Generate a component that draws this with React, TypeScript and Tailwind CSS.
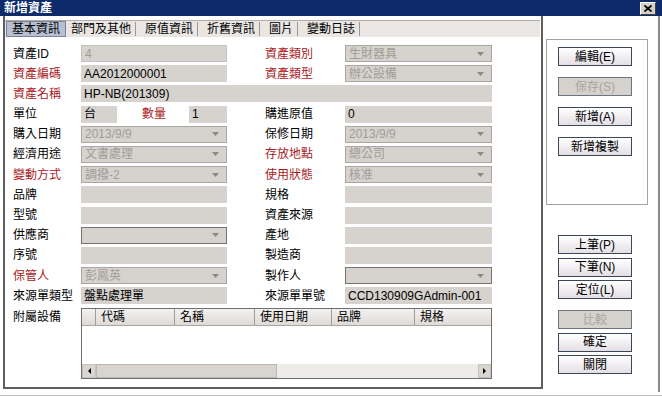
import React from "react";

type FieldKind = "text" | "dim" | "select" | "combo";

interface FieldProps {
  value?: string;
  kind?: FieldKind;
  className?: string;
}

const Arrow = () => (
  <svg width="7" height="4" viewBox="0 0 7 4" className="shrink-0 mr-[7px]">
    <path d="M0 0 L7 0 L3.5 4 Z" fill="#8c8884" />
  </svg>
);

const Field: React.FC<FieldProps> = ({ value = "", kind = "text", className = "" }) => {
  const base = "h-[17px] flex items-center bg-[#d6d3cf] pl-[3px] leading-none whitespace-nowrap overflow-hidden";
  if (kind === "select" || kind === "combo") {
    return (
      <div
        className={`${base} justify-between border ${
          kind === "combo" ? "border-[#77746f]" : "border-[#aaa6a2]"
        } text-[#a09c98] ${className}`}
      >
        <span>{value}</span>
        <Arrow />
      </div>
    );
  }
  if (kind === "dim") {
    return <div className={`${base} border border-[#c4c0bc] text-[#a09c98] ${className}`}>{value}</div>;
  }
  return <div className={`${base} text-black ${className}`}>{value}</div>;
};

const Label = ({ text, red }: { text: string; red?: boolean }) => (
  <div className={`h-[17px] flex items-center whitespace-nowrap ${red ? "text-[#a8191c]" : "text-black"}`}>
    {text}
  </div>
);

const Btn = ({ label, disabled }: { label: string; disabled?: boolean }) => (
  <div
    className={`w-[74px] h-[19px] shrink-0 flex items-center justify-center border leading-none ${
      disabled
        ? "border-[#6b7380] bg-[#d5d1cd] text-[#a9a5a1]"
        : "border-[#3b4656] bg-linear-to-b from-white to-[#e4dfe5] text-black"
    }`}
  >
    {label}
  </div>
);

const tabs = ["部門及其他", "原值資訊", "折舊資訊", "圖片", "變動日誌"];

const rows: [string, boolean, FieldProps, string, boolean, FieldProps][] = [
  ["資產ID", false, { kind: "dim", value: "4" }, "資產類別", true, { kind: "select", value: "生財器具" }],
  ["資產編碼", true, { value: "AA2012000001" }, "資產類型", true, { kind: "select", value: "辦公設備" }],
];

const rows2: [string, boolean, FieldProps, string, boolean, FieldProps][] = [
  ["購入日期", false, { kind: "select", value: "2013/9/9" }, "保修日期", false, { kind: "select", value: "2013/9/9" }],
  ["經濟用途", false, { kind: "select", value: "文書處理" }, "存放地點", true, { kind: "select", value: "總公司" }],
  ["變動方式", true, { kind: "select", value: "調撥-2" }, "使用狀態", true, { kind: "select", value: "核准" }],
  ["品牌", false, {}, "規格", false, {}],
  ["型號", false, {}, "資產來源", false, {}],
  ["供應商", false, { kind: "combo" }, "產地", false, {}],
  ["序號", false, {}, "製造商", false, {}],
  ["保管人", true, { kind: "select", value: "彭鳳英" }, "製作人", false, { kind: "combo" }],
  ["來源單類型", false, { value: "盤點處理單" }, "來源單單號", false, { value: "CCD130909GAdmin-001" }],
];

const FormRow = ({ r }: { r: [string, boolean, FieldProps, string, boolean, FieldProps] }) => (
  <>
    <Label text={r[0]} red={r[1]} />
    <Field {...r[2]} />
    <div />
    <Label text={r[3]} red={r[4]} />
    <Field {...r[5]} />
  </>
);

const columns = [
  { name: "代碼", w: "w-[79px]" },
  { name: "名稱", w: "w-[80px]" },
  { name: "使用日期", w: "w-[77px]" },
  { name: "品牌", w: "w-[83px]" },
  { name: "規格", w: "flex-1" },
];

const App: React.FC = () => {
  return (
    <div className="w-[662px] h-[396px] bg-white flex flex-col overflow-hidden text-[12px] font-['Liberation_Sans','Noto_Sans_CJK_TC',sans-serif]">
      {/* title bar */}
      <div className="h-[16px] shrink-0 bg-[#0d2a6b] flex items-center justify-between pl-[4px] pr-[6px]">
        <span className="text-white font-bold leading-none">新增資產</span>
        <div className="w-[16px] h-[13px] bg-[#d4d0c8] border border-t-white border-l-white border-r-[#404040] border-b-[#404040] flex items-center justify-center">
          <svg width="8" height="7" viewBox="0 0 8 7">
            <path d="M0.5 0.5 L7.5 6.5 M7.5 0.5 L0.5 6.5" stroke="#000" strokeWidth="1.8" />
          </svg>
        </div>
      </div>

      <div className="flex flex-1 pl-[3px] pr-[2px] pb-[3px] border-b border-[#c0c0c0]">
        {/* main panel */}
        <div className="w-[540px] shrink-0 flex flex-col border-x-2 border-b-2 border-[#5e5e5e] pt-[4px] mb-[3px]">
          <div className="h-[17px] shrink-0 flex items-stretch bg-[#e9e6e4] border-t border-[#b0acaa] mr-[1px]">
            <div className="ml-[1px] px-[5px] flex items-center bg-[#b6c0d0] border border-[#7a8698] leading-none">
              基本資訊
            </div>
            {tabs.map((t) => (
              <div key={t} className="flex items-center pl-[5px] pr-[4px] leading-none">
                <span className="pr-[4px]">{t}</span>
                <span className="w-px h-[14px] bg-[#9c9894]" />
              </div>
            ))}
          </div>

          <div className="pt-[8px] pl-[8px] grid grid-cols-[68px_146px_38px_80px_147px] gap-y-[3.2px] items-center">
            {rows.map((r) => (
              <FormRow key={r[0]} r={r} />
            ))}
            <Label text="資產名稱" red />
            <Field value="HP-NB(201309)" className="col-span-4" />
            <Label text="單位" />
            <div className="flex items-center">
              <Field value="台" className="w-[36px]" />
              <span className="ml-[25px] text-[#a8191c] leading-none">數量</span>
              <Field value="1" className="w-[38px] ml-auto" />
            </div>
            <div />
            <Label text="購進原值" />
            <Field value="0" />
            {rows2.map((r) => (
              <FormRow key={r[0]} r={r} />
            ))}
            <div className="self-start h-[17px] flex items-center mt-[1px]">附屬設備</div>
            <div className="col-span-4 h-[71px] mt-[1px] border border-[#6f6f6f] flex flex-col">
              <div className="h-[17px] flex bg-linear-to-b from-[#f3f1ef] to-[#dedad7] border-b border-[#a9a5a1]">
                <div className="w-[14px] shrink-0 border-r border-[#a09c98]" />
                {columns.map((c) => (
                  <div
                    key={c.name}
                    className={`${c.w} shrink-0 flex items-center pl-[5px] border-r border-[#a09c98] leading-none last:border-r-0`}
                  >
                    {c.name}
                  </div>
                ))}
              </div>
              <div className="flex-1 bg-white" />
              <div className="h-[14px] flex bg-[#eeece9]">
                <div className="w-[14px] flex items-center justify-center bg-[#d9d5d1] border border-[#c6c2be]">
                  <svg width="3" height="6" viewBox="0 0 3 6">
                    <path d="M3 0 L0 3 L3 6 Z" fill="#000" />
                  </svg>
                </div>
                <div className="w-[181px] bg-[#d8d4d0] border border-[#bcb8b4]" />
                <div className="flex-1" />
                <div className="w-[13px] flex items-center justify-center bg-[#d9d5d1] border border-[#c6c2be]">
                  <svg width="3" height="6" viewBox="0 0 3 6">
                    <path d="M0 0 L3 3 L0 6 Z" fill="#000" />
                  </svg>
                </div>
              </div>
            </div>
          </div>
        </div>

        {/* right button panel */}
        <div className="flex-1 flex flex-col border-r-2 border-[#8a8a8a]">
          <div className="ml-[3px] mt-[23px] w-[102px] h-[166px] border border-[#a4a4a4] pl-[11px] pt-[7px] flex flex-col gap-[11px]">
            <Btn label="編輯(E)" />
            <Btn label="保存(S)" disabled />
            <Btn label="新增(A)" />
            <Btn label="新增複製" />
          </div>
          <div className="pl-[15px] mt-[30px] flex flex-col gap-[3.5px]">
            <Btn label="上筆(P)" />
            <Btn label="下筆(N)" />
            <Btn label="定位(L)" />
            <div className="h-[4px]" />
            <Btn label="比較" disabled />
            <Btn label="確定" />
            <Btn label="關閉" />
          </div>
        </div>
      </div>
    </div>
  );
};

export default App;
